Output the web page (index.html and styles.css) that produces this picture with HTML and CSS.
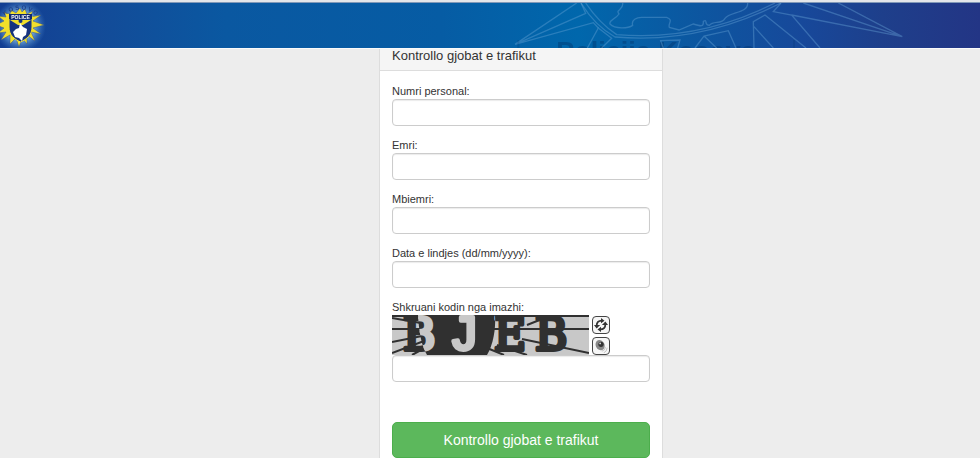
FILE: index.html
```html
<!DOCTYPE html>
<html lang="sq">
<head>
  <meta charset="UTF-8">
  <meta name="viewport" content="width=device-width, initial-scale=1.0">
  <title>Kontrollo gjobat e trafikut</title>
  <link rel="stylesheet" href="styles.css">
</head>
<body>

  <header class="banner">
    <svg class="logo" viewBox="0 0 46 46" aria-hidden="true">
      <defs>
        <radialGradient id="glow">
          <stop offset="50%" stop-color="#8fc4ec" stop-opacity="0.9"/>
          <stop offset="100%" stop-color="#3d7cc4" stop-opacity="0"/>
        </radialGradient>
      </defs>
      <circle cx="20" cy="24" r="26" fill="url(#glow)"/>
      <path fill="#f2df2b" stroke="#33508a" stroke-width="0.5" transform="translate(0 2)" d="M20 4l2 4 3-3 2 5 6-3-3 6 11-2-8 6 11 4-11 3 8 6-10-2 4 9-8-6 0 9-5-6-3 9-3-9-6 6 0-9-9 5 5-8-8 1 6-5-8-3 8-4-6-5 8 1-2-5 6 2 1-4 5 3z"/>
      <path fill="#17337f" stroke="#f2df2b" d="M9 14h23v11c0 8-5 12-11.500 15C14 37 9 33 9 25z"/>
      <path fill="#f2df2b" d="M10 18h21l-8 5h-5z"/>
      <circle cx="20.500" cy="19" r="2" fill="#17337f"/>
      <path fill="#fff" d="M20 21l3 4 4 2-1 6-3 2-1 4-3-3-4-1-2-5 3-3 3-1z"/>
      <path fill="#122a70" d="M9 12h23v5H9z"/>
      <text x="20.500" y="17" class="logo-police">POLICE</text>
      <path id="arc" fill="none" d="M1 17Q20.500 -2 40 17"/>
      <text class="logo-kosovo"><textPath href="#arc" startOffset="50%">K O S O V O</textPath></text>
    </svg>
    <span class="banner-title">Policija Kosova</span>
    <svg class="banner-art" viewBox="0 9 1440 135" aria-hidden="true">
      <path d="M230 9L45 133 257 40 243 9M45 133L280 68 295 84"/>
      <path d="M243 9Q285 78 345 111Q600 133 843 9M257 9Q298 70 350 104Q600 124 825 9"/>
      <path d="M368 9C372 30 345 28 357 42C345 60 325 60 330 72C345 88 385 85 398 76C393 60 410 52 425 52L500 52C522 60 503 70 508 82L537 90 580 72C605 80 611 80 610 64C625 56 610 75 628 76C640 60 665 75 675 55C690 35 745 40 743 9"/>
      <path d="M262 144L295 84 335 115 305 144M490 144L482 122 540 120 533 144M585 144L612 108 685 92 708 144M612 108L650 144"/>
      <path d="M762 144L760 65 795 45 918 144M762 80L820 144M843 9L820 35 875 45 960 144M875 45L1207 110 910 9M1015 9L1207 110"/>
      <path d="M55 120v24M882 120v24" class="dim"/>
    </svg>
  </header>

  <main class="panel">
    <h1 class="panel-heading">Kontrollo gjobat e trafikut</h1>
    <form class="panel-body">
      <div class="form-group">
        <label for="personal">Numri personal:</label>
        <input type="text" id="personal">
      </div>
      <div class="form-group">
        <label for="emri">Emri:</label>
        <input type="text" id="emri">
      </div>
      <div class="form-group">
        <label for="mbiemri">Mbiemri:</label>
        <input type="text" id="mbiemri">
      </div>
      <div class="form-group">
        <label for="data">Data e lindjes (dd/mm/yyyy):</label>
        <input type="text" id="data">
      </div>
      <div class="form-group">
        <label for="kodi">Shkruani kodin nga imazhi:</label>
        <div class="captcha">
          <svg class="captcha-image" viewBox="0 0 197 40" role="img" aria-label="Captcha">
            <defs>
              <clipPath id="lens"><path d="M26 0C27 16 29 30 35 40H95C101 30 104 14 103 0z"/></clipPath>
              <g id="code">
                <text x="11" y="35" class="serif">B</text>
                <text x="57" y="35" class="mono">J</text>
                <text x="102" y="35" class="serif">E</text>
                <text x="143" y="35" class="serif">B</text>
              </g>
            </defs>
            <rect width="197" height="40" fill="#c8c8c8"/>
            <path class="lines" d="M0 3L40 10M0 14H40M0 27L40 19M0 38L40 23M20 40L40 29M90 14H197M95 33L112 40M105 30L135 40M130 24L197 38M135 10L160 0M0 1H197"/>
            <g class="dark"><use href="#code"/></g>
            <g clip-path="url(#lens)">
              <rect width="197" height="40" fill="#303030"/>
              <g class="light"><use href="#code"/></g>
            </g>
          </svg>
          <div class="captcha-tools">
            <button type="button" aria-label="Rifresko">
              <svg viewBox="0 0 16 16" aria-hidden="true">
                <path fill="none" stroke="#333" stroke-width="2" d="M3 9C3 5 5 3 9 3M13 7C13 11 11 13 7 13"/>
                <path fill="#333" d="M8 0l4 3-4 3zM8 10v6l-4-3zM0 8h7L3 12zM9 8h7L13 4z"/>
              </svg>
            </button>
            <button type="button" aria-label="Dëgjo kodin">
              <svg viewBox="0 0 16 16" aria-hidden="true">
                <ellipse cx="7" cy="7" rx="5" ry="6" fill="#888" transform="rotate(-25 7 7)"/>
                <circle cx="8" cy="6" r="3" fill="#333"/>
                <circle cx="7" cy="5" r="1" fill="#ddd"/>
                <path fill="none" stroke="#bbb" d="M9 14q4-1 4-5M11 16q4-2 4-6"/>
              </svg>
            </button>
          </div>
        </div>
        <input type="text" id="kodi">
      </div>
      <button type="submit" class="submit-btn">Kontrollo gjobat e trafikut</button>
    </form>
  </main>

</body>
</html>
```
FILE: styles.css
```css
* {
  box-sizing: border-box;
}

body {
  margin: 0;
  padding-top: 41px;
  padding-left: 62px;
  background: #ededed;
  color: #333;
  font-family: Arial, "Liberation Sans", sans-serif;
  font-size: 11px;
}

.banner {
  position: fixed;
  top: 0;
  left: 0;
  right: 0;
  z-index: 10;
  display: flex;
  height: 48px;
  overflow: hidden;
  border-top: 2px solid #e4e6ea;
  background: linear-gradient(to right, #123e93 0, #134b98 10%, #0a58a1 23%, #065ca4 45%, #0067ac 59%, #0b58a1 70%, #17489a 82%, #1e3f8b 90%, #233585 100%);
  box-shadow: inset 0 1px #8299b8, 0 1px #fafafa;
}

.logo {
  width: 46px;
  height: 46px;
}

.logo-police {
  fill: #fff;
  font-size: 5px;
  font-weight: bold;
  text-anchor: middle;
}

.logo-kosovo {
  fill: #1d3f8a;
  font-size: 6px;
  font-weight: bold;
  text-anchor: middle;
}

.banner-title {
  position: absolute;
  top: 34px;
  left: 0;
  right: 0;
  padding-left: 332px;
  color: rgba(0, 50, 105, 0.4);
  font-size: 27px;
  font-weight: bold;
  line-height: 32px;
  text-align: center;
}

.banner-art {
  position: absolute;
  top: 1px;
  right: 0;
  width: 480px;
  height: 45px;
  fill: none;
  stroke: #6aa5d8;
  stroke-width: 4;
  stroke-opacity: 0.4;
}

.banner-art .dim {
  stroke: #003269;
  stroke-width: 6;
  stroke-opacity: 0.2;
}

.panel {
  width: 284px;
  margin: 0 auto;
  background: #fff;
  border: 1px solid #ddd;
  border-radius: 4px;
}

.panel-heading {
  margin: 0;
  padding: 6px 12px;
  background: #f5f5f5;
  border-bottom: 1px solid #ddd;
  font-size: 13px;
  font-weight: normal;
  line-height: 16px;
}

.panel-body {
  padding: 13px 12px;
}

.form-group {
  margin-bottom: 12px;
}

.form-group label {
  display: block;
  line-height: 15px;
}

.form-group input {
  display: block;
  width: 100%;
  height: 27px;
  padding: 4px 8px;
  border: 1px solid #ccc;
  border-radius: 4px;
  box-shadow: inset 0 1px 1px rgba(0, 0, 0, 0.08);
  font: inherit;
}

.captcha {
  display: flex;
  gap: 3px;
}

.captcha-image {
  width: 197px;
  height: 40px;
}

.captcha-image .lines {
  fill: none;
  stroke: #303030;
  stroke-width: 2;
}

.captcha-image .serif {
  font-family: "DejaVu Serif", serif;
  font-size: 44px;
}

.captcha-image .mono {
  font-family: "Liberation Mono", monospace;
  font-size: 50px;
}

.captcha-image .dark {
  fill: #303030;
  stroke: #303030;
  stroke-width: 4;
  stroke-linejoin: round;
}

.captcha-image .light {
  fill: #c8c8c8;
  stroke: #c8c8c8;
  stroke-width: 4;
  stroke-linejoin: round;
}

.captcha-tools {
  display: flex;
  flex-direction: column;
  justify-content: space-between;
  padding-top: 1px;
}

.captcha-tools button {
  display: flex;
  width: 18px;
  height: 18px;
  padding: 1px;
  border: 1px solid #444;
  border-radius: 4px;
  background: #f6f6f6;
  cursor: pointer;
}

.captcha-tools svg {
  width: 14px;
  height: 14px;
}

.submit-btn {
  width: 100%;
  height: 36px;
  margin-top: 28px;
  border: 1px solid #4cae4c;
  border-radius: 5px;
  background: #5cb85c;
  color: #fff;
  font-family: inherit;
  font-size: 14px;
  cursor: pointer;
}

.submit-btn:hover {
  background: #449d44;
}
```
